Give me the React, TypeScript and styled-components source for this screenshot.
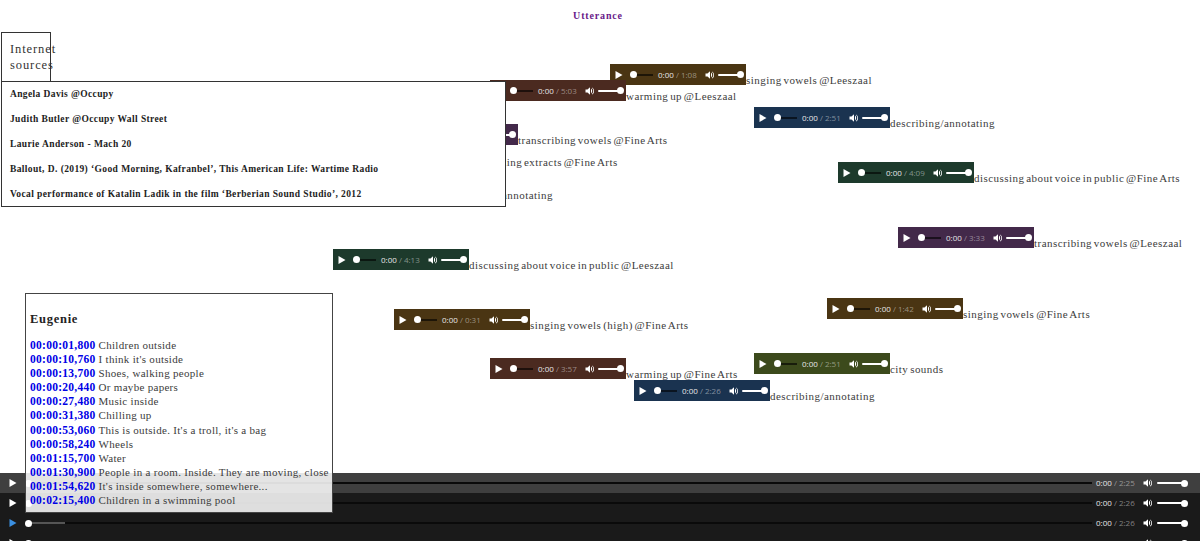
import React from "react";
import styled, { createGlobalStyle } from "styled-components";

const GlobalStyle = createGlobalStyle`
    html, body {
        margin: 0;
        padding: 0;
        height: 100%;
        background: #fff;
        overflow: hidden;
    }
    body {
        font-family: "Liberation Serif", "Times New Roman", serif;
        color: #333;
    }
`;

const Page = styled.div`
    position: relative;
    display: flex;
    flex-direction: column;
    height: 541px;
    overflow: hidden;
`;

const Title = styled.h1`
    margin: 0;
    padding: 10px 4px 0 0;
    height: 22px;
    text-align: center;
    font-size: 10px;
    line-height: 12px;
    font-weight: 700;
    letter-spacing: 0.85px;
    color: #6a1b8a;
`;

const Canvas = styled.div`
    position: relative;
    flex: 1;
`;

const SourcesTab = styled.div`
    position: absolute;
    z-index: 3;
    left: 1px;
    top: 0;
    width: 40px;
    height: 40px;
    border: 1px solid #333;
    padding: 8px 0 0 8px;
    font-size: 12.5px;
    line-height: 16px;
    letter-spacing: 0.9px;
    white-space: pre-line;
`;

const SourcesPanel = styled.ul`
    position: absolute;
    z-index: 2;
    left: 1px;
    top: 49px;
    width: 505px;
    height: 126px;
    margin: 0;
    padding: 6px 0 0 8px;
    box-sizing: border-box;
    list-style: none;
    background: #fff;
    border: 1px solid #333;
    display: flex;
    flex-direction: column;
    gap: 13px;
`;

const SourceItem = styled.li`
    font-size: 9.5px;
    line-height: 12px;
    font-weight: 700;
    letter-spacing: 0.36px;
    word-spacing: 0.2px;
    color: #222;
    white-space: nowrap;
`;

const NotesPanel = styled.div`
    position: absolute;
    z-index: 4;
    left: 25px;
    top: 261px;
    width: 308px;
    height: 220px;
    box-sizing: border-box;
    padding: 17px 0 0 4px;
    background: rgba(255, 255, 255, 0.86);
    border: 1px solid #444;
`;

const NotesTitle = styled.h2`
    margin: 0 0 11px;
    font-size: 12.5px;
    line-height: 16px;
    font-weight: 700;
    letter-spacing: 0.72px;
    color: #222;
`;

const NoteRow = styled.div`
    display: flex;
    gap: 3px;
    height: 14.1px;
    font-size: 11px;
    line-height: 14px;
    letter-spacing: 0.3px;
    white-space: nowrap;
    color: #3c3c3c;
`;

const Stamp = styled.span`
    font-weight: 700;
    font-size: 11.5px;
    letter-spacing: 0.27px;
    color: #0000e6;
`;

const Clip = styled.div<{ $x: number; $y: number }>`
    position: absolute;
    left: ${(p) => p.$x}px;
    top: ${(p) => p.$y}px;
    display: flex;
    align-items: flex-end;
    white-space: nowrap;
`;

const ClipLabel = styled.span`
    font-size: 11px;
    line-height: 13px;
    letter-spacing: 0.46px;
    word-spacing: -1.4px;
    color: #3c3c3c;
    transform: translateY(2px);
`;

const MiniPlayer = styled.div<{ $bg: string }>`
    width: 136px;
    height: 21px;
    flex: none;
    display: flex;
    align-items: center;
    background: ${(p) => p.$bg};
    padding: 0 4px;
    box-sizing: border-box;
`;

const PlayIcon = styled.svg`
    flex: none;
    width: 10px;
    height: 10px;
`;

const Track = styled.div<{ $width: number }>`
    position: relative;
    flex: none;
    width: ${(p) => p.$width}px;
    height: 2px;
    background: rgba(0, 0, 0, 0.6);
    margin-left: 9px;
`;

const Thumb = styled.span`
    position: absolute;
    left: -3px;
    top: -2.5px;
    width: 7px;
    height: 7px;
    border-radius: 50%;
    background: #fff;
`;

const Time = styled.span`
    flex: none;
    margin-left: 5px;
    width: 47px;
    font-family: "Open Sans", "Liberation Sans", sans-serif;
    font-size: 8px;
    line-height: 10px;
    color: #e6e6e6;
    white-space: nowrap;
`;

const Duration = styled.span`
    color: rgba(255, 255, 255, 0.45);
`;

const SpeakerIcon = styled.svg`
    flex: none;
    width: 10px;
    height: 10px;
`;

const Volume = styled.div`
    position: relative;
    flex: none;
    width: 25px;
    height: 2px;
    margin-left: 3px;
    background: #fff;
    border-radius: 1px;
`;

const VolumeThumb = styled.span`
    position: absolute;
    right: -1px;
    top: -2.5px;
    width: 7px;
    height: 7px;
    border-radius: 50%;
    background: #fff;
`;

const Dock = styled.div`
    display: flex;
    flex-direction: column;
    height: 68px;
    background: #1a1a1a;
`;

const DockBar = styled.div<{ $active?: boolean }>`
    flex: none;
    display: flex;
    align-items: center;
    height: 20px;
    padding: 0 13px 0 8px;
    box-sizing: border-box;
    background: ${(p) => (p.$active ? "#3f3f3f" : "#1a1a1a")};
`;

const DockTrack = styled.div`
    position: relative;
    flex: 1;
    height: 2px;
    margin: 0 4px 0 10px;
    background: #0a0a0a;
`;

const DockBuffered = styled.span<{ $width: number }>`
    position: absolute;
    left: 0;
    top: 0;
    height: 100%;
    width: ${(p) => p.$width}px;
    background: #555;
`;

const DockThumb = styled.span`
    position: absolute;
    left: -3px;
    top: -2.5px;
    width: 7px;
    height: 7px;
    border-radius: 50%;
    background: #fff;
`;

const DockTime = styled(Time)`
    margin-left: 0;
    width: 47px;
`;

const DockVolume = styled(Volume)`
    width: 30px;
    margin-left: 4px;
`;

const Play = ({ color = "#fff" }: { color?: string }) => (
    <PlayIcon viewBox="0 0 10 10">
        <path d="M1.5 1 L8.5 5 L1.5 9 Z" fill={color} />
    </PlayIcon>
);

const Speaker = () => (
    <SpeakerIcon viewBox="0 0 10 10">
        <path
            d="M0.5 3.4 H2.5 L5 1.2 V8.8 L2.5 6.6 H0.5 Z M6 2.6 C7.6 3.6 7.6 6.4 6 7.4 Z M7 1.4 C9.8 2.8 9.8 7.2 7 8.6 L7 7.9 C8.8 6.6 8.8 3.4 7 2.1 Z"
            fill="#fff"
        />
    </SpeakerIcon>
);

const colors = {
    tan: "#4a3513",
    brown: "#4b2a20",
    navy: "#1a3350",
    purple: "#43294a",
    green: "#1d3a2c",
    olive: "#3c4a1c",
};

const clips = [
    { x: 610, y: 32, bg: colors.tan, total: "1:08", label: "singing vowels @Leeszaal" },
    { x: 490, y: 48, bg: colors.brown, total: "5:03", label: "warming up @Leeszaal" },
    { x: 754, y: 75, bg: colors.navy, total: "2:51", label: "describing/annotating" },
    { x: 382, y: 92, bg: colors.purple, total: "3:33", label: "transcribing vowels @Fine Arts" },
    { x: 350, y: 114, bg: colors.tan, total: "2:10", label: "reading extracts @Fine Arts" },
    { x: 312, y: 147, bg: colors.navy, total: "2:51", label: "describing/annotating" },
    { x: 838, y: 130, bg: colors.green, total: "4:09", label: "discussing about voice in public @Fine Arts" },
    { x: 898, y: 195, bg: colors.purple, total: "3:33", label: "transcribing vowels @Leeszaal" },
    { x: 333, y: 217, bg: colors.green, total: "4:13", label: "discussing about voice in public @Leeszaal" },
    { x: 394, y: 277, bg: colors.tan, total: "0:31", label: "singing vowels (high) @Fine Arts" },
    { x: 827, y: 266, bg: colors.tan, total: "1:42", label: "singing vowels @Fine Arts" },
    { x: 490, y: 326, bg: colors.brown, total: "3:57", label: "warming up @Fine Arts" },
    { x: 754, y: 321, bg: colors.olive, total: "2:51", label: "city sounds" },
    { x: 634, y: 348, bg: colors.navy, total: "2:26", label: "describing/annotating" },
];

const sources = [
    "Angela Davis @Occupy",
    "Judith Butler @Occupy Wall Street",
    "Laurie Anderson - Mach 20",
    "Ballout, D. (2019) ‘Good Morning, Kafranbel’, This American Life: Wartime Radio",
    "Vocal performance of Katalin Ladik in the film ‘Berberian Sound Studio’, 2012",
];

const notes = [
    ["00:00:01,800", "Children outside"],
    ["00:00:10,760", "I think it's outside"],
    ["00:00:13,700", "Shoes, walking people"],
    ["00:00:20,440", "Or maybe papers"],
    ["00:00:27,480", "Music inside"],
    ["00:00:31,380", "Chilling up"],
    ["00:00:53,060", "This is outside. It's a troll, it's a bag"],
    ["00:00:58,240", "Wheels"],
    ["00:01:15,700", "Water"],
    ["00:01:30,900", "People in a room. Inside. They are moving, close"],
    ["00:01:54,620", "It's inside somewhere, somewhere..."],
    ["00:02:15,400", "Children in a swimming pool"],
];

const dockBars = [
    { total: "2:25", active: true, color: "#fff", buffered: 0 },
    { total: "2:26", active: false, color: "#fff", buffered: 0 },
    { total: "2:26", active: false, color: "#3b8fe0", buffered: 37 },
    { total: "2:26", active: false, color: "#fff", buffered: 0 },
];

const App = () => {
    return (
        <Page>
            <GlobalStyle />
            <Title>Utterance</Title>
            <Canvas>
                {clips.map((clip) => (
                    <Clip key={clip.label + clip.x} $x={clip.x} $y={clip.y}>
                        <MiniPlayer $bg={clip.bg}>
                            <Play />
                            <Track $width={20}>
                                <Thumb />
                            </Track>
                            <Time>
                                0:00 <Duration>/ {clip.total}</Duration>
                            </Time>
                            <Speaker />
                            <Volume>
                                <VolumeThumb />
                            </Volume>
                        </MiniPlayer>
                        <ClipLabel>{clip.label}</ClipLabel>
                    </Clip>
                ))}
                <SourcesTab>{"Internet\nsources"}</SourcesTab>
                <SourcesPanel>
                    {sources.map((source) => (
                        <SourceItem key={source}>{source}</SourceItem>
                    ))}
                </SourcesPanel>
                <NotesPanel>
                    <NotesTitle>Eugenie</NotesTitle>
                    {notes.map(([stamp, text]) => (
                        <NoteRow key={stamp}>
                            <Stamp>{stamp}</Stamp>
                            <span>{text}</span>
                        </NoteRow>
                    ))}
                </NotesPanel>
            </Canvas>
            <Dock>
                {dockBars.map((bar, i) => (
                    <DockBar key={i} $active={bar.active}>
                        <Play color={bar.color} />
                        <DockTrack>
                            <DockBuffered $width={bar.buffered} />
                            <DockThumb />
                        </DockTrack>
                        <DockTime>
                            0:00 <Duration>/ {bar.total}</Duration>
                        </DockTime>
                        <Speaker />
                        <DockVolume>
                            <VolumeThumb />
                        </DockVolume>
                    </DockBar>
                ))}
            </Dock>
        </Page>
    );
};

export default App;
